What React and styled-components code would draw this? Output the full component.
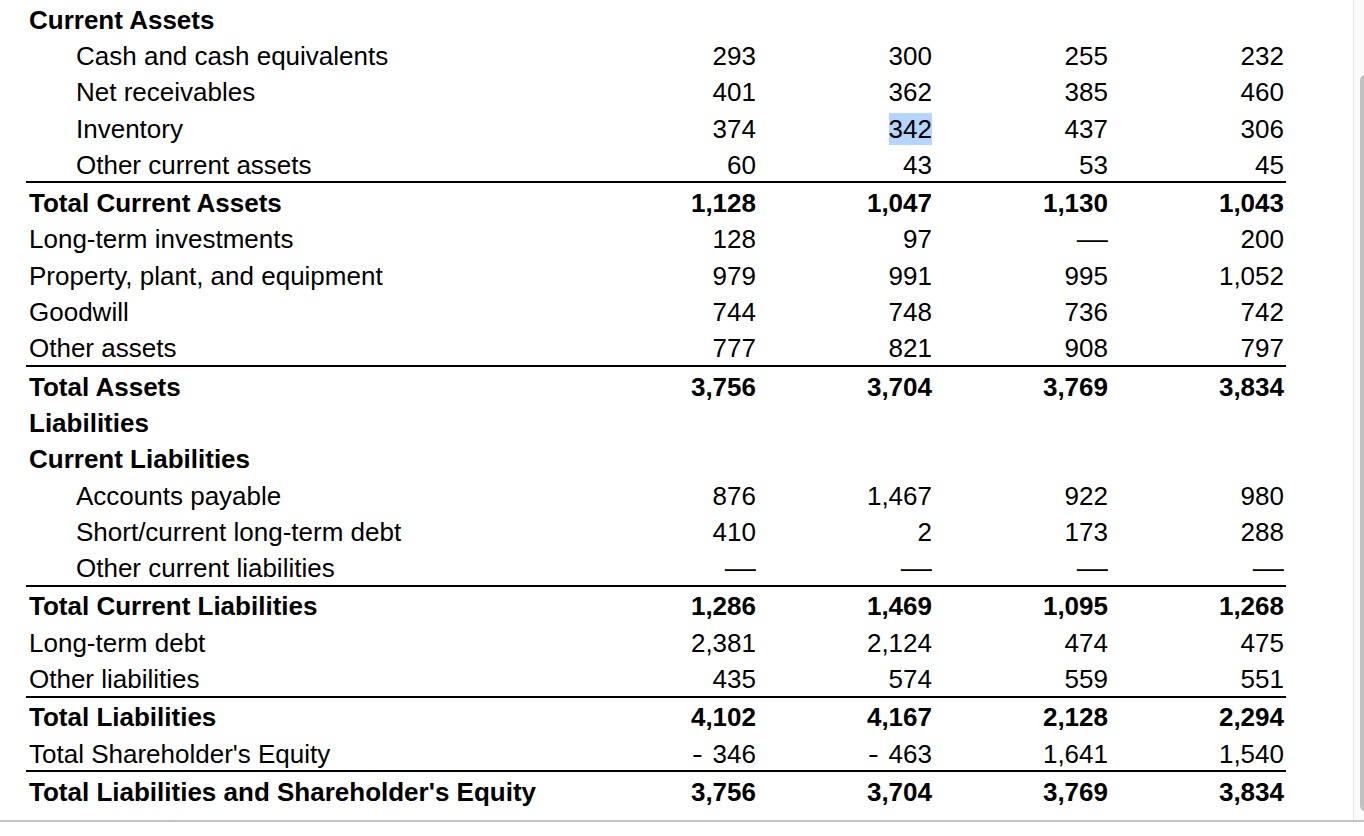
import styled, { createGlobalStyle } from "styled-components"

const GlobalStyle = createGlobalStyle`
  html, body {
    margin: 0;
    padding: 0;
    background: #ffffff;
  }
  body {
    font-family: "Liberation Sans", Arial, Helvetica, sans-serif;
    color: #000;
  }
`

const rows = [
  { label: "Current Assets", bold: true },
  { label: "Cash and cash equivalents", indent: true, values: ["293", "300", "255", "232"] },
  { label: "Net receivables", indent: true, values: ["401", "362", "385", "460"] },
  { label: "Inventory", indent: true, values: ["374", "342", "437", "306"], selected: 1 },
  { label: "Other current assets", indent: true, values: ["60", "43", "53", "45"] },
  { label: "Total Current Assets", bold: true, rule: true, values: ["1,128", "1,047", "1,130", "1,043"] },
  { label: "Long-term investments", values: ["128", "97", "—", "200"] },
  { label: "Property, plant, and equipment", values: ["979", "991", "995", "1,052"] },
  { label: "Goodwill", values: ["744", "748", "736", "742"] },
  { label: "Other assets", values: ["777", "821", "908", "797"] },
  { label: "Total Assets", bold: true, rule: true, values: ["3,756", "3,704", "3,769", "3,834"] },
  { label: "Liabilities", bold: true },
  { label: "Current Liabilities", bold: true },
  { label: "Accounts payable", indent: true, values: ["876", "1,467", "922", "980"] },
  { label: "Short/current long-term debt", indent: true, values: ["410", "2", "173", "288"] },
  { label: "Other current liabilities", indent: true, values: ["—", "—", "—", "—"] },
  { label: "Total Current Liabilities", bold: true, rule: true, values: ["1,286", "1,469", "1,095", "1,268"] },
  { label: "Long-term debt", values: ["2,381", "2,124", "474", "475"] },
  { label: "Other liabilities", values: ["435", "574", "559", "551"] },
  { label: "Total Liabilities", bold: true, rule: true, values: ["4,102", "4,167", "2,128", "2,294"] },
  { label: "Total Shareholder's Equity", values: ["-346", "-463", "1,641", "1,540"] },
  { label: "Total Liabilities and Shareholder's Equity", bold: true, rule: true, values: ["3,756", "3,704", "3,769", "3,834"] },
]

function Cell({ value, selected }) {
  if (value === "—") return <Dash>—</Dash>
  if (value.startsWith("-")) {
    return (
      <>
        <Minus>-</Minus>
        {value.slice(1)}
      </>
    )
  }
  if (selected) return <Selected>{value}</Selected>
  return value
}

function App() {
  return (
    <>
      <GlobalStyle />
      <Frame>
        <Viewport>
          <Content>
            <Sheet>
              {rows.map((r) => (
                <Row key={r.label} $bold={r.bold} $rule={r.rule}>
                  <Label $indent={r.indent}>{r.label}</Label>
                  {(r.values || ["", "", "", ""]).map((v, i) => (
                    <Value key={i}>
                      {v && <Cell value={v} selected={r.selected === i} />}
                    </Value>
                  ))}
                </Row>
              ))}
            </Sheet>
          </Content>
          <Scrollbar>
            <Thumb />
          </Scrollbar>
        </Viewport>
      </Frame>
    </>
  )
}

const Frame = styled.div`
  width: 1364px;
  height: 836px;
  overflow: hidden;
  background: #fff;
`

const Viewport = styled.div`
  display: flex;
  height: 820px;
  border-bottom: 2px solid #c4c4c4;
`

const Content = styled.div`
  flex: 1;
  overflow: hidden;
  padding-left: 26px;
`

const Sheet = styled.div`
  display: flex;
  flex-direction: column;
  width: 1260px;
`

const Row = styled.div`
  display: grid;
  grid-template-columns: 556px repeat(4, 176px);
  align-items: center;
  height: 33.3px;
  padding-top: 3px;
  font-size: 26px;
  line-height: 30px;
  font-weight: ${(p) => (p.$bold ? 700 : 400)};
  border-top: ${(p) => (p.$rule ? "2px solid #000" : "none")};
`

const Label = styled.div`
  padding-left: ${(p) => (p.$indent ? 50 : 3)}px;
  white-space: nowrap;
`

const Value = styled.div`
  text-align: right;
  padding-right: 2px;
  white-space: nowrap;
`

const Selected = styled.span`
  display: inline-block;
  background: #b4d5fe;
  line-height: 32px;
`

const Minus = styled.span`
  display: inline-block;
  margin-right: 11px;
  transform: scaleX(1.25);
`

const Dash = styled.span`
  display: inline-block;
  transform: scaleX(1.2);
  transform-origin: right center;
`

const Scrollbar = styled.div`
  width: 11px;
  flex: none;
  border-left: 1px solid #e6e6e6;
  background: #fafafa;
  padding: 75px 0 0 6px;
  box-sizing: border-box;
  overflow: hidden;
`

const Thumb = styled.div`
  width: 10px;
  height: 736px;
  background: #c1c1c1;
  border-radius: 6px;
`

export default App
